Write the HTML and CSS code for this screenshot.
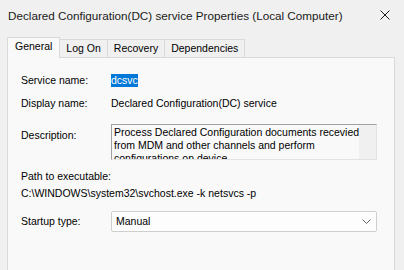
FILE: index.html
```html
<!DOCTYPE html>
<html lang="en">
<head>
    <meta charset="UTF-8">
    <title>Declared Configuration(DC) service Properties (Local Computer)</title>
    <link rel="stylesheet" href="styles.css">
</head>
<body>
    <div class="window">
        <div class="titlebar">
            <span class="title">Declared Configuration(DC) service Properties (Local Computer)</span>
            <svg class="close" width="10" height="10" viewBox="0 0 10 10">
                <path d="M0.5 0.5 L9.5 9.5 M9.5 0.5 L0.5 9.5" stroke="#1a1a1a" stroke-width="1" fill="none"/>
            </svg>
        </div>

        <div class="tabs">
            <div class="tab active">General</div>
            <div class="tab">Log On</div>
            <div class="tab">Recovery</div>
            <div class="tab">Dependencies</div>
        </div>

        <div class="panel">
            <div class="row first">
                <span class="label">Service name:</span>
                <span class="value"><span class="selected">dcsvc</span></span>
            </div>
            <div class="row">
                <span class="label">Display name:</span>
                <span class="value">Declared Configuration(DC) service</span>
            </div>
            <div class="row desc-row">
                <span class="label">Description:</span>
                <div class="desc-box">
                    <div class="desc-text">Process Declared Configuration documents recevied<br>from MDM and other channels and perform<br>configurations on device.</div>
                    <div class="scroll-track"></div>
                </div>
            </div>
            <div class="path-label">Path to executable:</div>
            <div class="path-value">C:\WINDOWS\system32\svchost.exe -k netsvcs -p</div>
            <div class="row startup-row">
                <span class="label">Startup type:</span>
                <div class="select">
                    <span>Manual</span>
                    <svg width="9" height="5" viewBox="0 0 9 5">
                        <path d="M0.5 0.5 L4.5 4.5 L8.5 0.5" stroke="#606060" stroke-width="1" fill="none"/>
                    </svg>
                </div>
            </div>
        </div>
    </div>
</body>
</html>
```

FILE: styles.css
```css
* {
    box-sizing: border-box;
}

body {
    margin: 0;
    background-color: #f0f0f0;
    font-family: "Liberation Sans", Arial, sans-serif;
    font-size: 10.5px;
    color: #000;
    overflow: hidden;
}

.window {
    width: 404px;
    height: 270px;
    overflow: hidden;
}

.titlebar {
    height: 30px;
    display: flex;
    align-items: center;
    justify-content: space-between;
    padding: 0 14px 0 8px;
}

.title {
    font-size: 11.7px;
    color: #1a1a1a;
}

.tabs {
    display: flex;
    align-items: flex-end;
    height: 27px;
    margin-left: 7px;
    padding-top: 7px;
}

.tab {
    height: 18px;
    line-height: 17px;
    padding: 0 6px;
    background-color: #f0f0f0;
    border: 1px solid #d9d9d9;
    border-bottom: none;
    margin-left: -1px;
    color: #000;
}

.tab:first-child {
    margin-left: 0;
}

.tab.active {
    height: 21px;
    line-height: 17px;
    padding: 0 7px;
    background-color: #f9f9f9;
    border-color: #d9d9d9;
    margin-bottom: -1px;
    position: relative;
    z-index: 1;
}

.panel {
    margin: 0 9px 0 7px;
    height: 240px;
    background-color: #f9f9f9;
    border: 1px solid #d9d9d9;
    padding: 16px 0 0 13px;
}

.row {
    display: flex;
    align-items: center;
    line-height: 13px;
    margin-top: 10px;
}

.row.first {
    margin-top: 0;
}

.label {
    width: 90px;
    flex-shrink: 0;
}

.selected {
    background-color: #0078d7;
    color: #fff;
    display: inline-block;
}

.desc-row {
    align-items: flex-start;
    margin-top: 14px;
}

.desc-row .label {
    margin-top: 5px;
}

.desc-box {
    width: 266px;
    height: 36px;
    display: flex;
    border: 1px solid #a0a0a0;
    border-right-color: #e3e3e3;
    border-bottom-color: #e3e3e3;
    background-color: #f9f9f9;
    overflow: hidden;
}

.desc-text {
    flex: 1;
    min-width: 0;
    padding: 1px 0 0 2px;
    line-height: 13px;
    white-space: nowrap;
    overflow: hidden;
}

.scroll-track {
    width: 17px;
    flex-shrink: 0;
    background-color: #f0f0f0;
}

.path-label {
    margin-top: 10px;
    line-height: 13px;
}

.path-value {
    margin-top: 4px;
    line-height: 13px;
}

.startup-row {
    margin-top: 11px;
}

.select {
    width: 266px;
    height: 21px;
    display: flex;
    align-items: center;
    justify-content: space-between;
    padding: 0 5px 0 4px;
    background-color: #fdfdfd;
    border: 1px solid #cfcfcf;
    border-radius: 2px;
}
```
